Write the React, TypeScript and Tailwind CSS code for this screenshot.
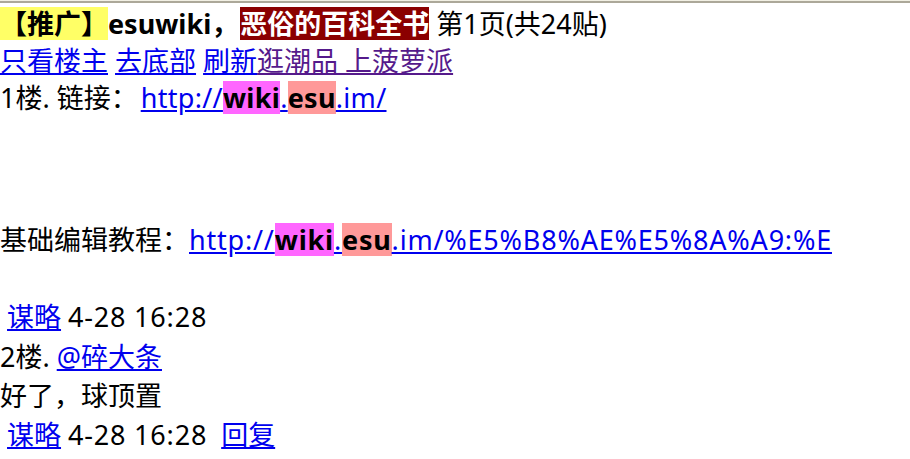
const box = 'inline-block leading-[33px] font-bold';
const link = 'text-[#0000ee] underline';

export default function App() {
  return (
    <div className="min-h-screen bg-white">
      <div className="h-[3px] border-t border-[#f2f0e4] bg-[#aca899]" />
      <div className="font-['Noto_Sans','Noto_Sans_CJK_SC',sans-serif] text-[27px] leading-[37px] text-black">
        <div className="pt-[2px]">
          <span className={`${box} bg-[#ffff66]`}>【推广】</span>
          <span className="font-bold">esuwiki，</span>
          <span className={`${box} ml-[2px] bg-[#8b0000] text-white`}>恶俗的百科全书</span> 第1页(共24贴)
        </div>
        <div>
          <a href="#" className={link}>只看楼主</a>{' '}
          <a href="#" className={link}>去底部</a>{' '}
          <a href="#" className={link}>刷新</a>
          <a href="#" className="text-[#551a8b] underline">逛潮品 上菠萝派</a>
        </div>
        <div>
          1楼. 链接：
          <a href="#" className={`${link} ml-[3px] tracking-[0.3px]`}>
            http://<span className={`${box} bg-[#ff66ff] text-black`}>wiki</span>.
            <span className={`${box} bg-[#ff9999] text-black`}>esu</span>.im/
          </a>
        </div>
        <div className="h-[105px]" />
        <div>
          基础编辑教程：
          <a href="#" className={`${link} tracking-[0.8px]`}>
            http://<span className={`${box} bg-[#ff66ff] text-black`}>wiki</span>.
            <span className={`${box} bg-[#ff9999] text-black`}>esu</span>.im/%E5%B8%AE%E5%8A%A9:%E
          </a>
        </div>
        <div className="h-[40px]" />
        <div>
          &nbsp;<a href="#" className={link}>谋略</a> <span className="tracking-[0.8px]">4-28 16:28</span>
        </div>
        <div className="mt-[3px]">
          2楼. <a href="#" className={link}>@碎大条</a>
        </div>
        <div className="mt-[2px]">好了，球顶置</div>
        <div className="mt-[2px]">
          &nbsp;<a href="#" className={link}>谋略</a> <span className="tracking-[0.8px]">4-28 16:28</span>&nbsp;&nbsp;
          <a href="#" className={link}>回复</a>
        </div>
      </div>
    </div>
  );
}
